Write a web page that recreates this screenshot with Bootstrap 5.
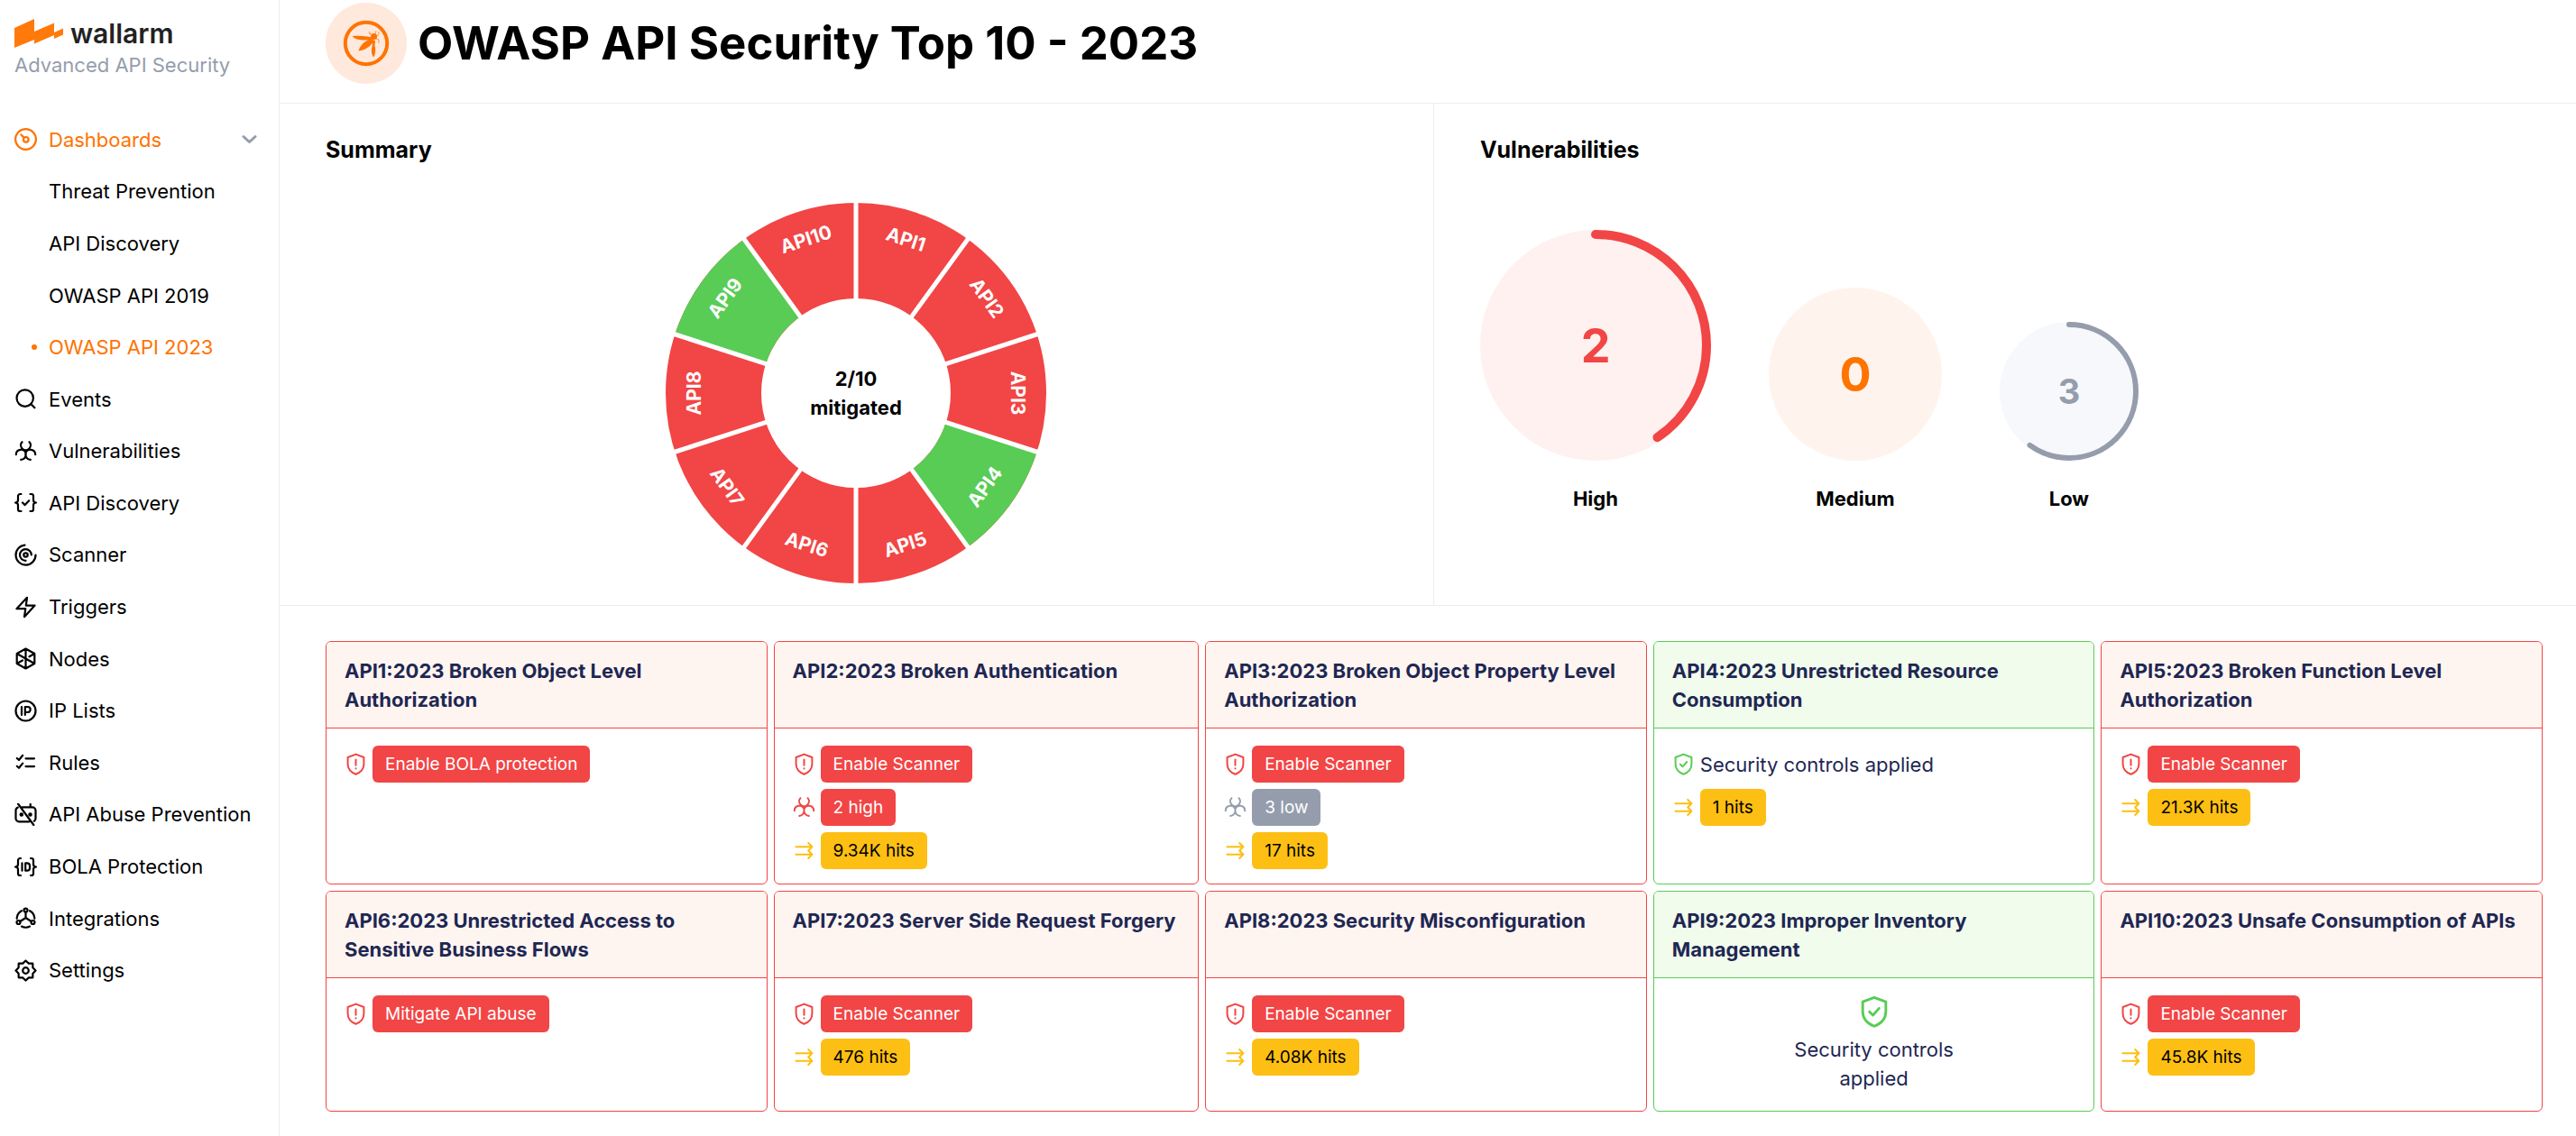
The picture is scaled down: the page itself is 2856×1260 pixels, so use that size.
<!DOCTYPE html>
<html lang="en">
<head>
<meta charset="utf-8">
<meta name="viewport" content="width=device-width, initial-scale=1">
<title>OWASP API Security Top 10 - 2023</title>
<link href="https://cdn.jsdelivr.net/npm/bootstrap@5.3.0/dist/css/bootstrap.min.css" rel="stylesheet">
<style>
  :root { --wl-red:#f24545; --wl-green:#58cc55; --wl-orange:#ff7300; --wl-grey:#959dad; --wl-yellow:#fdbf13; --wl-navy:#1e2753; --wl-line:#edeef1; }
  body { font-family: Inter, "Liberation Sans", sans-serif; font-size: 22px; line-height: 32px; color: #000; background: #fff; }
  a { text-decoration: none; }
  .ico { fill: none; stroke: currentColor; stroke-width: 2; stroke-linecap: round; stroke-linejoin: round; flex: none; width: 25px; height: 25px; overflow: visible; }

  .side { flex: 0 0 310px; border-right: 1px solid var(--wl-line); padding-top: 18px; }
  .brand { color: #222; height: 38px; padding-left: 16px; gap: 8px; }
  .brand-name { font-size: 30px; font-weight: 600; line-height: 36px; }
  .tagline { color: var(--wl-grey); padding-left: 16px; }
  .menu { display: grid; grid-auto-rows: 1fr; min-height: 979px; margin-top: 38px; }
  .menu .ico { stroke-width: 2.2; }
  .menu-link { display: flex; align-items: center; gap: 13px; width: 100%; padding: 0 24px 0 16px; border: 0; background: none; color: #000; text-align: left; }
  .menu-link.active { color: var(--wl-orange); }
  .dot { width: 25px; display: flex; justify-content: flex-end; }
  .dot::after { content: ""; width: 6px; height: 6px; border-radius: 50%; }
  .active > .dot::after { background: currentColor; }

  .page-head { padding: 3px 51px 21px; gap: 12px; border-bottom: 1px solid var(--wl-line); }
  .page-title { font-size: 51px; font-weight: 700; line-height: 64px; }
  .overview { display: grid; grid-template-columns: 93fr 92fr; border-bottom: 1px solid var(--wl-line); }
  .panel { padding: 35px 51px 24px; }
  .panel:first-child { border-right: 1px solid var(--wl-line); }
  .panel-title { font-size: 25px; font-weight: 700; line-height: 32px; }
  .donut { width: 422px; height: 422px; margin-top: 43px; }
  .donut text { font-size: 21px; font-weight: 700; fill: #fff; text-anchor: middle; }
  .donut .mid { font-size: 22px; fill: #000; }
  .gauges { gap: 64px; margin-top: 73px; }
  .gauge { text-align: center; font-weight: 700; }
  .gauge svg { display: block; margin-bottom: 26px; }
  .gauge text { text-anchor: middle; font-weight: 700; font-size: 52px; }
  .gauge .small-num { font-size: 38px; }

  .risks { display: grid; grid-template-columns: 490fr 472fr 490fr 490fr 490fr; gap: 7px; padding: 39px 37px 24px 51px; }
  .risk { border: 1px solid var(--wl-red); border-radius: 6px; overflow: hidden; color: var(--wl-navy); }
  .risk-head { margin: 0; padding: 16px 20px 15px; min-height: 96px; font-size: 22px; line-height: 32px; font-weight: 700; background: #fff5f0; border-bottom: 1px solid var(--wl-red); }
  .risk-body { display: flex; flex-direction: column; gap: 7px; padding: 19px 20px 16px; }
  .risk.ok, .ok .risk-head { border-color: var(--wl-green); }
  .ok .risk-head { background: #f1fcec; }
  .fact { display: flex; align-items: center; gap: 6px; min-height: 41px; }
  .tag { font-size: 19px; line-height: 41px; padding: 0 14px; border: 0; border-radius: 6px; color: #fff; }
  .c-red { color: var(--wl-red); } .c-grey { color: var(--wl-grey); } .c-yellow { color: var(--wl-yellow); } .c-green { color: var(--wl-green); }
  .bg-red { background: var(--wl-red); } .bg-grey { background: var(--wl-grey); } .bg-yellow { background: var(--wl-yellow); color: #000; }
  .all-ok { width: 256px; margin: 0 auto; gap: 8px; }
  .all-ok .ico { width: 36px; height: 36px; }
</style>
<script src="https://cdn.jsdelivr.net/npm/bootstrap@5.3.0/dist/js/bootstrap.bundle.min.js"></script>
</head>
<body>
<svg width="0" height="0" class="position-absolute" aria-hidden="true">
  <symbol id="i-gauge" viewBox="0 0 25 25"><circle cx="12.5" cy="12.5" r="11.4"/><circle cx="12.8" cy="12.8" r="2.8"/><path d="M7.4 7.4l3.2 3.2"/></symbol>
  <symbol id="i-search" viewBox="0 0 25 25"><circle cx="11.7" cy="11.6" r="9.2"/><path d="M18.4 18.3l4 4"/></symbol>
  <symbol id="i-bio" viewBox="0 0 25 25"><path d="M8.5 2.2A5.4 5.4 0 1 0 16.5 2.2M1.8 16.2A5.5 5.5 0 0 1 12.5 14.5C13.3 18 11 21.9 7.2 21.9M23.2 16.2A5.5 5.5 0 0 0 12.5 14.5C11.7 18 14 21.9 17.8 21.9M12.5 11.6v3"/></symbol>
  <symbol id="i-api" viewBox="0 0 25 25"><path d="M7.5 3H6.3A2.3 2.3 0 0 0 4 5.3V9.5C4 11.5 3 12.5 1 12.5C3 12.5 4 13.5 4 15.5V19.7A2.3 2.3 0 0 0 6.3 22H7.5M17.5 3h1.2A2.3 2.3 0 0 1 21 5.3V9.5C21 11.5 22 12.5 24 12.5C22 12.5 21 13.5 21 15.5V19.7A2.3 2.3 0 0 1 18.7 22H17.5M9 12.5l2.7 2.6L16.2 10.3"/></symbol>
  <symbol id="i-scan" viewBox="0 0 25 25"><path d="M11.5 1.6A11 11 0 1 0 23.5 12.5M18.8 12.5A6.4 6.4 0 1 0 12.5 18.9"/><circle cx="12.5" cy="12.5" r="2.2"/></symbol>
  <symbol id="i-bolt" viewBox="0 0 25 25"><path d="M14 1.8L2.4 14.2H12.3L11 23.2L22.6 10.6H12.8z"/></symbol>
  <symbol id="i-node" viewBox="0 0 25 25"><path d="M12.5 1.5L22.3 7V18L12.5 23.5L2.7 18V7zM12.5 1.5V23.5M2.7 7L22.3 18M22.3 7L16.5 10.3M2.7 18L9 14.5"/></symbol>
  <symbol id="i-ip" viewBox="0 0 25 25"><circle cx="12.5" cy="12.5" r="11"/><path d="M8 8v9M11.800 17V8h2.900a3 3 0 0 1 0 6h-2.900"/></symbol>
  <symbol id="i-rules" viewBox="0 0 25 25"><path d="M2.8 8l2.2 2L9.2 4.8M2.8 16.8l2.2 2L9.2 13.6M12.5 8.3H22M12.5 17.1H22"/></symbol>
  <symbol id="i-bot" viewBox="0 0 25 25"><path d="M8.5 4.4H20A3.5 3.5 0 0 1 23.5 7.9V16.5A3.5 3.5 0 0 1 21.8 19.7M16.5 20.3H5A3.5 3.5 0 0 1 1.5 16.8V7.9A3.5 3.5 0 0 1 3.8 4.6M17.7 1v3.4M4 .5L21.3 24"/><circle cx="7.8" cy="12.5" r="1.2" fill="currentColor"/><circle cx="17.5" cy="12.5" r="1.2" fill="currentColor"/></symbol>
  <symbol id="i-id" viewBox="0 0 25 25"><path d="M7 3H6.3A2.3 2.3 0 0 0 4 5.3V9.5C4 11.5 3 12.5 1 12.5C3 12.5 4 13.5 4 15.5V19.7A2.3 2.3 0 0 0 6.3 22H7M18 3h.7A2.3 2.3 0 0 1 21 5.3V9.5C21 11.5 22 12.5 24 12.5C22 12.5 21 13.5 21 15.5V19.7A2.3 2.3 0 0 1 18.7 22H18M8.5 8.3v8.4M12.2 8.3h1.800a3 3 0 0 1 3 3v2.400a3 3 0 0 1-3 3h-1.800z"/></symbol>
  <symbol id="i-int" viewBox="0 0 25 25"><circle cx="12.5" cy="3.6" r="2"/><circle cx="4.5" cy="17" r="2"/><circle cx="20.5" cy="17" r="2"/><path d="M12.5 5.6V12M12.5 12L6.3 16M12.5 12L18.7 16M8 4.2A10 10 0 0 0 2.7 12.8M17 4.2A10 10 0 0 1 22.3 12.8M8 21.6A10 10 0 0 0 17 21.6"/></symbol>
  <symbol id="i-gear" viewBox="0 0 25 25"><path d="M12.5 1.5L15.8 4.6L20.3 4.7L20.4 9.2L23.5 12.5L20.4 15.8L20.3 20.3L15.8 20.4L12.5 23.5L9.2 20.4L4.7 20.3L4.6 15.8L1.5 12.5L4.6 9.2L4.7 4.7L9.2 4.6z"/><circle cx="12.5" cy="12.5" r="3.3"/></symbol>
  <symbol id="i-warn" viewBox="0 0 25 25"><path d="M12.5 1.6L21.4 5V12.5C21.4 18 17.5 21.8 12.5 23.8C7.5 21.8 3.6 18 3.6 12.5V5zM12.5 7.6v6.2M12.5 17.3v.1"/></symbol>
  <symbol id="i-safe" viewBox="0 0 25 25"><path d="M12.5 1.6L21.4 5V12.5C21.4 18 17.5 21.8 12.5 23.8C7.5 21.8 3.6 18 3.6 12.5V5zM8.8 12.6l2.7 2.7l4.7-5.3"/></symbol>
  <symbol id="i-hits" viewBox="0 0 25 25"><path d="M3.400 8.200H21.200M17.200 4L21.400 8.200L17.200 12.500M3.400 16.800H21.200M17.200 12.500L21.400 16.800L17.200 21"/></symbol>
</svg>

<div class="d-flex min-vh-100">
  <aside class="side">
    <a href="#" class="brand d-flex align-items-center">
      <svg width="54" height="32" viewBox="0 0 54 32" fill="#ff7a0a" aria-hidden="true"><path d="M0 10L22 0V14L44 4.500V15L54 10.500V17.500L44 22V18L22 27.500V23L0 32z"/></svg>
      <span class="brand-name">wallarm</span>
    </a>
    <div class="tagline">Advanced API Security</div>
    <nav class="menu">
      <button type="button" class="menu-link active"><svg class="ico"><use href="#i-gauge"/></svg><span class="flex-grow-1">Dashboards</span><svg class="flex-shrink-0" width="17" height="11" viewBox="0 0 17 11" fill="none" stroke="#959dad" stroke-width="3" stroke-linecap="round" stroke-linejoin="round"><path d="M2 2.500l6.500 6l6.500-6"/></svg></button>
      <a href="#" class="menu-link"><span class="dot"></span>Threat Prevention</a>
      <a href="#" class="menu-link"><span class="dot"></span>API Discovery</a>
      <a href="#" class="menu-link"><span class="dot"></span>OWASP API 2019</a>
      <a href="#" class="menu-link active"><span class="dot"></span>OWASP API 2023</a>
      <a href="#" class="menu-link"><svg class="ico"><use href="#i-search"/></svg>Events</a>
      <a href="#" class="menu-link"><svg class="ico"><use href="#i-bio"/></svg>Vulnerabilities</a>
      <a href="#" class="menu-link"><svg class="ico"><use href="#i-api"/></svg>API Discovery</a>
      <a href="#" class="menu-link"><svg class="ico"><use href="#i-scan"/></svg>Scanner</a>
      <a href="#" class="menu-link"><svg class="ico"><use href="#i-bolt"/></svg>Triggers</a>
      <a href="#" class="menu-link"><svg class="ico"><use href="#i-node"/></svg>Nodes</a>
      <a href="#" class="menu-link"><svg class="ico"><use href="#i-ip"/></svg>IP Lists</a>
      <a href="#" class="menu-link"><svg class="ico"><use href="#i-rules"/></svg>Rules</a>
      <a href="#" class="menu-link text-nowrap"><svg class="ico"><use href="#i-bot"/></svg>API Abuse Prevention</a>
      <a href="#" class="menu-link"><svg class="ico"><use href="#i-id"/></svg>BOLA Protection</a>
      <a href="#" class="menu-link"><svg class="ico"><use href="#i-int"/></svg>Integrations</a>
      <a href="#" class="menu-link"><svg class="ico"><use href="#i-gear"/></svg>Settings</a>
    </nav>
  </aside>

  <main class="flex-grow-1">
    <header class="page-head d-flex align-items-center">
      <svg class="flex-shrink-0" width="90" height="90" viewBox="0 0 90 90" aria-hidden="true">
        <circle cx="45" cy="45" r="45" fill="#ffe8dc"/><circle cx="45" cy="45" r="23.200" fill="none" stroke="#ff7300" stroke-width="4"/>
        <g fill="#ff7300"><path d="M29.500 37.200C36 36.200 45 37 51 38.500V40.500C43 42 34 42 29.500 37.200zM50.500 40L54 42C50 48 44 53 36.500 53.500C38 47 44 42 50.500 40zM52 42h3L54.500 48C56 52 55 57 53.500 60.500C51 58 50 53 51.800 48z"/><circle cx="53.500" cy="37.500" r="3.600"/></g>
        <path d="M55 35l1-4M50 35l-2-3M56 38l3-3v-3M56 40l3 1v4M48 34l2 1" fill="none" stroke="#ff7300" stroke-width=".7"/>
      </svg>
      <h1 class="page-title mb-0">OWASP API Security Top 10 - 2023</h1>
    </header>

    <div class="overview">
      <section class="panel">
        <h2 class="panel-title mb-0">Summary</h2>
        <svg class="donut d-block mx-auto" viewBox="-211 -211 422 422" role="img" aria-label="2 of 10 mitigated">
          <g fill="none" stroke-width="106">
            <circle r="158" stroke="#f24545"/>
            <circle r="158" stroke="#58cc55" pathLength="10" stroke-dasharray="1 9" transform="rotate(18)"/>
            <circle r="158" stroke="#58cc55" pathLength="10" stroke-dasharray="1 9" transform="rotate(198)"/>
          </g>
          <path stroke="#fff" stroke-width="5" d="M0-212V-104M0 212V104M124.600-171.500L61.100-84.100M-124.600-171.500L-61.100-84.100M124.600 171.500L61.100 84.100M-124.600 171.500L-61.100 84.100M201.600-65.500L98.900-32.100M-201.600-65.500L-98.900-32.100M201.600 65.500L98.900 32.100M-201.600 65.500L-98.900 32.100"/>
          <g>
            <text y="-172" transform="rotate(18)">API1</text>
            <text y="-172" transform="rotate(54)">API2</text>
            <text y="-172" transform="rotate(90)">API3</text>
            <text y="184" transform="rotate(-54)">API4</text>
            <text y="184" transform="rotate(-18)">API5</text>
            <text y="184" transform="rotate(18)">API6</text>
            <text y="184" transform="rotate(54)">API7</text>
            <text y="-172" transform="rotate(-90)">API8</text>
            <text y="-172" transform="rotate(-54)">API9</text>
            <text y="-172" transform="rotate(-18)">API10</text>
            <text class="mid" y="-8">2/10</text>
            <text class="mid" y="24">mitigated</text>
          </g>
        </svg>
      </section>
      <section class="panel">
        <h2 class="panel-title mb-0">Vulnerabilities</h2>
        <div class="gauges d-flex align-items-end">
          <div class="gauge"><svg width="256" height="256" viewBox="-128 -128 256 256"><circle r="128" fill="#fff1f0"/><circle r="123" fill="none" stroke="#f24545" stroke-width="10" stroke-linecap="round" pathLength="1000" stroke-dasharray="406 594" transform="rotate(-90)"/><text y="19" fill="#f24545">2</text></svg>High</div>
          <div class="gauge"><svg width="192" height="192" viewBox="-96 -96 192 192"><circle r="96" fill="#fff4ed"/><text y="19" fill="#ff7300">0</text></svg>Medium</div>
          <div class="gauge"><svg width="154" height="154" viewBox="-77 -77 154 154"><circle r="77" fill="#f6f8fb"/><circle r="74" fill="none" stroke="#959dad" stroke-width="6" stroke-linecap="round" pathLength="1000" stroke-dasharray="600 400" transform="rotate(-90)"/><text class="small-num" y="14" fill="#959dad">3</text></svg>Low</div>
        </div>
      </section>
    </div>

    <div class="risks">
      <article class="risk"><h3 class="risk-head">API1:2023 Broken Object Level Authorization</h3><div class="risk-body">
        <div class="fact"><svg class="ico c-red"><use href="#i-warn"/></svg><a href="#" class="btn tag bg-red">Enable BOLA protection</a></div></div></article>
      <article class="risk"><h3 class="risk-head">API2:2023 Broken Authentication</h3><div class="risk-body">
        <div class="fact"><svg class="ico c-red"><use href="#i-warn"/></svg><a href="#" class="btn tag bg-red">Enable Scanner</a></div>
        <div class="fact"><svg class="ico c-red"><use href="#i-bio"/></svg><a href="#" class="btn tag bg-red">2 high</a></div>
        <div class="fact"><svg class="ico c-yellow"><use href="#i-hits"/></svg><a href="#" class="btn tag bg-yellow">9.34K hits</a></div></div></article>
      <article class="risk"><h3 class="risk-head">API3:2023 Broken Object Property Level Authorization</h3><div class="risk-body">
        <div class="fact"><svg class="ico c-red"><use href="#i-warn"/></svg><a href="#" class="btn tag bg-red">Enable Scanner</a></div>
        <div class="fact"><svg class="ico c-grey"><use href="#i-bio"/></svg><a href="#" class="btn tag bg-grey">3 low</a></div>
        <div class="fact"><svg class="ico c-yellow"><use href="#i-hits"/></svg><a href="#" class="btn tag bg-yellow">17 hits</a></div></div></article>
      <article class="risk ok"><h3 class="risk-head">API4:2023 Unrestricted Resource Consumption</h3><div class="risk-body">
        <div class="fact"><svg class="ico c-green"><use href="#i-safe"/></svg><span>Security controls applied</span></div>
        <div class="fact"><svg class="ico c-yellow"><use href="#i-hits"/></svg><a href="#" class="btn tag bg-yellow">1 hits</a></div></div></article>
      <article class="risk"><h3 class="risk-head">API5:2023 Broken Function Level Authorization</h3><div class="risk-body">
        <div class="fact"><svg class="ico c-red"><use href="#i-warn"/></svg><a href="#" class="btn tag bg-red">Enable Scanner</a></div>
        <div class="fact"><svg class="ico c-yellow"><use href="#i-hits"/></svg><a href="#" class="btn tag bg-yellow">21.3K hits</a></div></div></article>

      <article class="risk"><h3 class="risk-head">API6:2023 Unrestricted Access to Sensitive Business Flows</h3><div class="risk-body">
        <div class="fact"><svg class="ico c-red"><use href="#i-warn"/></svg><a href="#" class="btn tag bg-red">Mitigate API abuse</a></div></div></article>
      <article class="risk"><h3 class="risk-head">API7:2023 Server Side Request Forgery</h3><div class="risk-body">
        <div class="fact"><svg class="ico c-red"><use href="#i-warn"/></svg><a href="#" class="btn tag bg-red">Enable Scanner</a></div>
        <div class="fact"><svg class="ico c-yellow"><use href="#i-hits"/></svg><a href="#" class="btn tag bg-yellow">476 hits</a></div></div></article>
      <article class="risk"><h3 class="risk-head">API8:2023 Security Misconfiguration</h3><div class="risk-body">
        <div class="fact"><svg class="ico c-red"><use href="#i-warn"/></svg><a href="#" class="btn tag bg-red">Enable Scanner</a></div>
        <div class="fact"><svg class="ico c-yellow"><use href="#i-hits"/></svg><a href="#" class="btn tag bg-yellow">4.08K hits</a></div></div></article>
      <article class="risk ok"><h3 class="risk-head">API9:2023 Improper Inventory Management</h3><div class="risk-body">
        <div class="all-ok d-flex flex-column align-items-center text-center pb-1"><svg class="ico c-green"><use href="#i-safe"/></svg><span>Security controls applied</span></div></div></article>
      <article class="risk"><h3 class="risk-head">API10:2023 Unsafe Consumption of APIs</h3><div class="risk-body">
        <div class="fact"><svg class="ico c-red"><use href="#i-warn"/></svg><a href="#" class="btn tag bg-red">Enable Scanner</a></div>
        <div class="fact"><svg class="ico c-yellow"><use href="#i-hits"/></svg><a href="#" class="btn tag bg-yellow">45.8K hits</a></div></div></article>
    </div>
  </main>
</div>
</body>
</html>
